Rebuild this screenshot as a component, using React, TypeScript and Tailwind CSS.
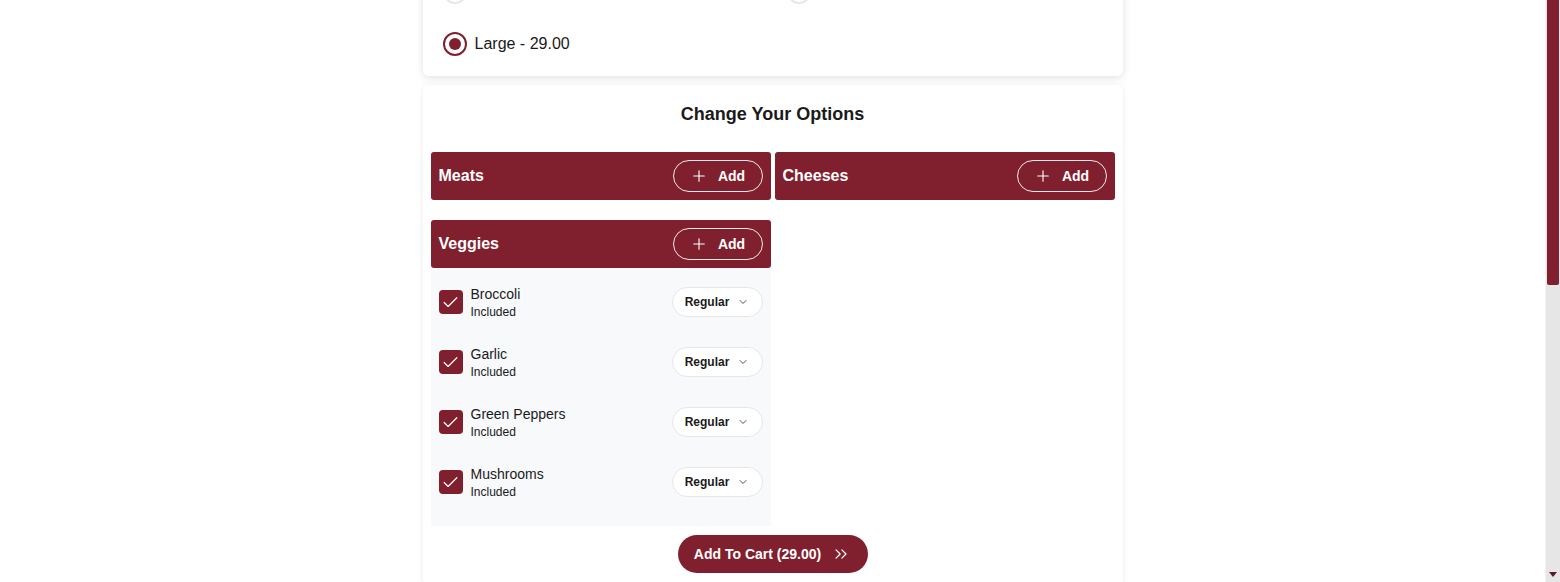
import { Check, ChevronDown, ChevronsRight, Plus } from 'lucide-react';

const sizes = [
  { label: 'Small - 19.00', selected: false },
  { label: 'Medium - 24.00', selected: false },
  { label: 'Large - 29.00', selected: true },
];

const veggies = ['Broccoli', 'Garlic', 'Green Peppers', 'Mushrooms'];

function Radio({ selected }: { selected: boolean }) {
  return selected ? (
    <span className="w-6 h-6 rounded-full border-2 border-[#80202e] flex items-center justify-center">
      <span className="w-3 h-3 rounded-full bg-[#80202e]" />
    </span>
  ) : (
    <span className="w-6 h-6 rounded-full border-2 border-gray-200 bg-white" />
  );
}

function GroupHeader({ title }: { title: string }) {
  return (
    <div className="h-12 bg-[#80202e] rounded-[3px] flex items-center justify-between pl-2 pr-2">
      <span className="text-white font-bold text-base">{title}</span>
      <button className="h-8 w-[90px] rounded-full border border-white/90 text-white flex items-center justify-center gap-2.5 text-sm font-bold">
        <Plus size={18} strokeWidth={1.5} />
        Add
      </button>
    </div>
  );
}

export default function App() {
  return (
    <div
      className="h-[582px] flex bg-white text-[#1a1a1a] overflow-hidden"
      style={{ fontFamily: '"Liberation Sans", Arial, sans-serif' }}
    >
      <div className="flex-1 min-w-0">
        <div className="w-[700px] mx-auto">
          {/* Size card */}
          <div className="-mt-[40px] bg-white rounded-md shadow-[0_2px_8px_rgba(0,0,0,0.12)] p-5">
            <div className="grid grid-cols-2 gap-x-7 gap-y-[28px]">
              {sizes.map((s) => (
                <label key={s.label} className="flex items-center gap-2 h-6 text-base">
                  <Radio selected={s.selected} />
                  {s.selected && <span>{s.label}</span>}
                </label>
              ))}
            </div>
          </div>

          {/* Options card */}
          <div className="mt-[9px] bg-white rounded-md shadow-[0_1px_6px_rgba(0,0,0,0.08)] px-2 pt-[19px] pb-3">
            <h2 className="text-center text-lg font-bold leading-5">Change Your Options</h2>

            <div className="grid grid-cols-2 gap-x-1 gap-y-5 mt-[28px]">
              <div>
                <GroupHeader title="Meats" />
              </div>
              <div>
                <GroupHeader title="Cheeses" />
              </div>
              <div>
                <GroupHeader title="Veggies" />
                <div className="bg-[#f8f9fb] pt-1 pb-[14px] px-2">
                  {veggies.map((v) => (
                    <div key={v} className="h-[60px] flex items-center justify-between">
                      <div className="flex items-center gap-2">
                        <span className="w-6 h-6 rounded-[4px] bg-[#80202e] flex items-center justify-center text-white">
                          <Check size={19} strokeWidth={1.5} />
                        </span>
                        <div className="flex flex-col">
                          <span className="text-sm leading-5">{v}</span>
                          <span className="text-xs leading-4">Included</span>
                        </div>
                      </div>
                      <button className="h-[30px] w-[91px] rounded-full border border-gray-200 bg-white flex items-center justify-center gap-2 text-xs font-bold">
                        Regular
                        <ChevronDown size={12} strokeWidth={1.5} />
                      </button>
                    </div>
                  ))}
                </div>
              </div>
            </div>

            <div className="flex justify-center mt-[9px]">
              <button className="h-[38px] w-[190px] rounded-full bg-[#80202e] text-white text-sm font-bold flex items-center justify-center gap-2.5">
                Add To Cart (29.00)
                <ChevronsRight size={20} strokeWidth={1.5} />
              </button>
            </div>
          </div>
        </div>
      </div>

      {/* scrollbar */}
      <div className="w-[15px] shrink-0 bg-[#e6e6e6] border-l border-[#f2f2f2] flex flex-col">
        <div className="h-[285px] mx-px bg-[#80202e] rounded-b-[2px]" />
        <div className="flex-1" />
        <div className="h-[15px] flex items-center justify-center">
          <svg width="8" height="5" viewBox="0 0 8 5">
            <path d="M0 0h8L4 5z" fill="#5a1a26" />
          </svg>
        </div>
      </div>
    </div>
  );
}
